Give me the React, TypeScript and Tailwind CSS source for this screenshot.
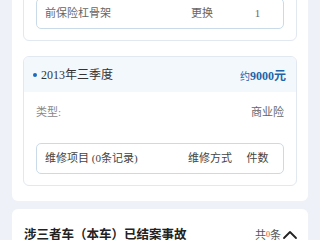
import { ChevronUp } from "lucide-react";

const font = { fontFamily: '"Liberation Serif", "Noto Sans CJK SC", sans-serif' };

function Row({ name, way, count, head }: { name: string; way: string; count: string; head?: boolean }) {
	return (
		<div className={`flex h-[29px] items-center px-[8px] text-[11px] ${head ? "text-[#444]" : "text-[#666]"}`}>
			<span className="flex-1">{name}</span>
			<span className={`w-[52px] ${head ? "" : "pl-[3px]"}`}>{way}</span>
			<span className="w-[35px] text-center">{count}</span>
		</div>
	);
}

export default function App() {
	return (
		<div className="min-h-[240px] bg-[#eef2f8] px-[12px]" style={font}>
			<div className="-mt-[15px] rounded-b-[6px] bg-white px-[11px] pb-[15px]">
				<div className="rounded-[6px] border border-[#e2e8f0] px-[12px] pb-[11px] pt-[12px]">
					<div className="rounded-[5px] border border-[#c9dbe9]">
						<Row name="前保险杠骨架" way="更换" count="1" />
					</div>
				</div>

				<div className="mt-[15px] overflow-hidden rounded-[6px] border border-[#e2e8f0]">
					<div className="flex h-[35px] items-center justify-between bg-[#f3f8fd] pl-[9px] pr-[10px]">
						<div className="flex items-center gap-[4px] text-[12px] text-[#333]">
							<span className="h-[4px] w-[4px] rounded-full bg-[#1d6bbf]" />
							<span>2013年三季度</span>
						</div>
						<div className="text-[#2563a8]">
							<span className="text-[10px]">约</span>
							<span className="text-[12px] font-bold">9000元</span>
						</div>
					</div>
					<div className="px-[12px] pb-[11px] pt-[11px]">
						<div className="flex h-[18px] items-center justify-between text-[11px]">
							<span className="text-[#888]">类型:</span>
							<span className="text-[#666]">商业险</span>
						</div>
						<div className="mt-[22px] rounded-[5px] border border-[#c9dbe9]">
							<Row head name="维修项目 (0条记录)" way="维修方式" count="件数" />
						</div>
					</div>
				</div>
			</div>

			<div className="mt-[8px] rounded-t-[6px] bg-white pl-[12px] pr-[6px] pt-[16px]">
				<div className="flex h-[20px] items-center justify-between">
					<span className="text-[12.5px] font-bold text-[#222]">涉三者车（本车）已结案事故</span>
					<div className="flex items-center text-[11px] text-[#555]">
						<span>共</span>
						<span className="text-[8px] text-[#e53935]">0</span>
						<span>条</span>
						<ChevronUp size={24} strokeWidth={1.8} className="-ml-[3px] text-[#222]" />
					</div>
				</div>
			</div>
		</div>
	);
}
